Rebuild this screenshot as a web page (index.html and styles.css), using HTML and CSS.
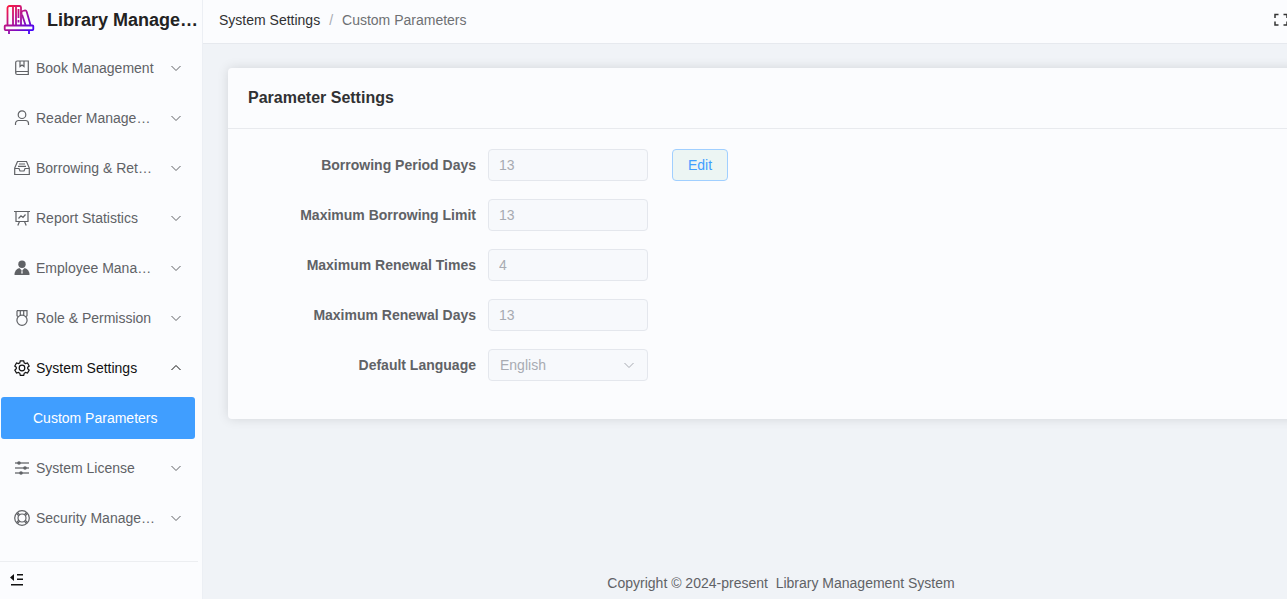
FILE: index.html
```html
<!DOCTYPE html>
<html lang="en">
<head>
<meta charset="utf-8">
<title>Library Management System</title>
<meta name="viewport" content="width=device-width, initial-scale=1">
<link rel="stylesheet" href="styles.css">
</head>
<body>
<svg class="defs" aria-hidden="true">
  <defs>
    <linearGradient id="brand" gradientUnits="userSpaceOnUse" x1="3" y1="3" x2="27" y2="31">
      <stop offset="0" stop-color="#ff1a3c"/>
      <stop offset="0.5" stop-color="#a8109a"/>
      <stop offset="1" stop-color="#3a00ff"/>
    </linearGradient>
    <symbol id="down" viewBox="0 0 12 12"><path d="M1.500 4 6 8.500 10.500 4"/></symbol>
    <symbol id="up" viewBox="0 0 12 12"><path d="M1.500 8 6 3.500 10.500 8"/></symbol>
  </defs>
</svg>
<div class="app">
  <aside class="sidebar">
    <div class="brand">
      <svg class="logo" viewBox="0 0 32 32" aria-hidden="true">
        <g fill="none" stroke="url(#brand)" stroke-width="1.800" stroke-linejoin="round">
          <path d="M4.500 22V5a2 2 0 0 1 2-2h10a1.500 1.500 0 0 1 1.500 1.500V22M10 3v19M13 3v19"/>
          <path d="M18.500 11V9.500q0-1.200 1.200-1.500l2-.5q1.500-.3 2 1.200L27.500 22M19 11.500l3.500 10.500"/>
          <path d="M2.500 22.500h27q.8 0 .8.800v3q0 .8-.8.800h-27q-.8 0-.8-.8v-3q0-.8.800-.8zM6 27v4M26 27v4"/>
          <path d="M15.500 6v9M15.500 17v2.500"/>
        </g>
      </svg>
      <h1 class="brand-name">Library Management System</h1>
    </div>
    <nav class="menu">
      <button class="item" type="button">
        <svg class="icon" viewBox="0 0 16 16"><path d="M3.500 1h10.800v13.500H3.200a1.500 1.500 0 0 1-1.500-1.500V2.500A1.500 1.500 0 0 1 3.200 1h.3M1.700 13q0-1.500 1.500-1.500h11M6 1v5.500l2-1.500 2 1.500V1"/></svg>
        <span class="text">Book Management</span><svg class="arrow"><use href="#down"/></svg>
      </button>
      <button class="item" type="button">
        <svg class="icon" viewBox="0 0 16 16"><circle cx="8" cy="4.700" r="3.800"/><path d="M1.500 15v-1.500a3 3 0 0 1 3-3h7a3 3 0 0 1 3 3V15"/></svg>
        <span class="text">Reader Management</span><svg class="arrow"><use href="#down"/></svg>
      </button>
      <button class="item" type="button">
        <svg class="icon" viewBox="0 0 16 16"><path d="M3.500 1.500h9L15.300 8v6.500H.7V8zM.7 8.500H5l1 2.500h4l1-2.500h4.300M5 4h6M4 6.300h8"/></svg>
        <span class="text">Borrowing &amp; Return</span><svg class="arrow"><use href="#down"/></svg>
      </button>
      <button class="item" type="button">
        <svg class="icon" viewBox="0 0 16 16"><path d="M0 1.500h16M2 1.500v10h12v-10M5.500 11.500l-1.700 4M10.500 11.500l1.700 4M4.500 8.500 7 5.800l2 1.700L11.500 4.500"/></svg>
        <span class="text">Report Statistics</span><svg class="arrow"><use href="#down"/></svg>
      </button>
      <button class="item" type="button">
        <svg class="icon solid" viewBox="0 0 16 16"><circle cx="8" cy="4.300" r="3.700"/><path d="M.5 15q0-5.500 4.800-7l2.300 2.200L7.300 13l.7 1 .7-1-.3-2.800L10.700 8q4.800 1.500 4.800 7z"/></svg>
        <span class="text">Employee Management</span><svg class="arrow"><use href="#down"/></svg>
      </button>
      <button class="item" type="button">
        <svg class="icon" viewBox="0 0 16 16"><circle cx="8" cy="10.300" r="5.100"/><path d="M3 .7h10v5l-1 1M3 .7v5l1 1M6.300.7v4.500M9.700.7v4.500"/></svg>
        <span class="text">Role &amp; Permission</span><svg class="arrow"><use href="#down"/></svg>
      </button>
      <button class="item open" type="button" aria-expanded="true">
        <svg class="icon" viewBox="0 0 16 16"><path d="M6.300.8h3.400l.5 2 1.300.8 2-.6 1.700 3-1.500 1.300v1.500l1.500 1.300-1.700 3-2-.6-1.300.8-.5 2H6.300l-.5-2-1.300-.8-2 .6-1.700-3 1.500-1.400V7.300L.8 6l1.700-3 2 .6 1.300-.8z"/><circle cx="8" cy="8" r="2.800"/></svg>
        <span class="text">System Settings</span><svg class="arrow"><use href="#up"/></svg>
      </button>
      <a class="subitem" href="#custom" aria-current="page">Custom Parameters</a>
      <button class="item" type="button">
        <svg class="icon" viewBox="0 0 16 16"><path class="rails" d="M1 3h14M1 8h14M1 13h14"/><g class="dots"><circle cx="5" cy="3" r="1.800"/><circle cx="11" cy="8" r="1.800"/><circle cx="7" cy="13" r="1.800"/></g></svg>
        <span class="text">System License</span><svg class="arrow"><use href="#down"/></svg>
      </button>
      <button class="item" type="button">
        <svg class="icon" viewBox="0 0 16 16"><circle cx="8" cy="8" r="7.300"/><circle cx="8" cy="8" r="4"/><path d="m2.500 3.500 2.300 2.300M3.500 2.500l2.300 2.300M12.500 2.500l-2.300 2.300M13.500 3.500l-2.300 2.300M2.500 12.500l2.300-2.300M3.500 13.500l2.300-2.300M13.500 12.500l-2.300-2.300M12.500 13.500l-2.300-2.300"/></svg>
        <span class="text">Security Management</span><svg class="arrow"><use href="#down"/></svg>
      </button>
    </nav>
    <div class="side-foot">
      <button class="plain" type="button" aria-label="Collapse menu">
        <svg class="fold" viewBox="0 0 14 14"><path d="M4 2v7L0 5.500zM7 2h6v1.500H7zM7 6.500h6V8H7zM1 12h12v1.500H1z"/></svg>
      </button>
    </div>
  </aside>
  <div class="page">
    <header class="topbar">
      <nav class="crumbs" aria-label="Breadcrumb">
        <a href="#settings">System Settings</a><span class="slash">/</span><span>Custom Parameters</span>
      </nav>
      <button class="plain full" type="button" aria-label="Full screen">
        <svg class="expand" viewBox="0 0 14 14"><path d="M1 5V1.500h3.500M9.500 1.500H13V5M13 8.500V12H9.500M4.500 12H1V8.500"/></svg>
      </button>
    </header>
    <main class="content">
      <section class="card">
        <h2 class="card-title">Parameter Settings</h2>
        <form class="form">
          <div class="row">
            <label for="period">Borrowing Period Days</label>
            <input class="field" id="period" value="13" disabled>
            <button class="edit" type="button">Edit</button>
          </div>
          <div class="row">
            <label for="limit">Maximum Borrowing Limit</label>
            <input class="field" id="limit" value="13" disabled>
          </div>
          <div class="row">
            <label for="times">Maximum Renewal Times</label>
            <input class="field" id="times" value="4" disabled>
          </div>
          <div class="row">
            <label for="days">Maximum Renewal Days</label>
            <input class="field" id="days" value="13" disabled>
          </div>
          <div class="row">
            <label for="language">Default Language</label>
            <div class="select">
              <select class="field" id="language" disabled><option>English</option></select>
              <svg class="arrow caret"><use href="#down"/></svg>
            </div>
          </div>
        </form>
      </section>
    </main>
    <footer class="copyright">Copyright © 2024-present&nbsp; Library Management System</footer>
  </div>
</div>
</body>
</html>
```
FILE: styles.css
```css
* {
  box-sizing: border-box;
}

body {
  margin: 0;
  font: 14px/20px "Liberation Sans", Arial, sans-serif;
  color: #606266;
  background: #f0f3f7;
}

button,
input,
select {
  font: inherit;
  color: inherit;
}

a {
  color: inherit;
  text-decoration: none;
}

.defs {
  position: absolute;
  width: 0;
  height: 0;
}

.app {
  display: flex;
  min-height: 100vh;
  overflow: hidden;
}

.sidebar {
  display: flex;
  flex-direction: column;
  flex: none;
  width: 203px;
  background: #fbfcfe;
  border-right: 1px solid #eceff4;
}

.brand {
  display: flex;
  align-items: center;
  gap: 12px;
  height: 43px;
  padding: 0 0 4px 3px;
}

.logo {
  flex: none;
  width: 32px;
  height: 32px;
  margin-bottom: 2px;
}

.brand-name {
  margin: 0;
  font-size: 18px;
  line-height: 24px;
  color: #222;
  white-space: nowrap;
  overflow: hidden;
  text-overflow: ellipsis;
}

.menu {
  flex: 1;
}

.item {
  display: flex;
  align-items: center;
  gap: 6px;
  width: 100%;
  height: 50px;
  padding: 0 20px 0 14px;
  border: 0;
  background: none;
  text-align: left;
}

.item.open {
  color: #111;
}

.icon,
.arrow {
  flex: none;
  fill: none;
  stroke: currentColor;
}

.icon {
  width: 16px;
  height: 16px;
  stroke-width: 1.2;
}

.icon.solid {
  fill: currentColor;
  stroke: none;
}

.rails {
  stroke: #999b9e;
  stroke-width: 2;
}

.dots {
  fill: currentColor;
  stroke: none;
}

.arrow {
  width: 12px;
  height: 12px;
}

.text {
  flex: 1;
  margin-right: 8px;
  white-space: nowrap;
  overflow: hidden;
  text-overflow: ellipsis;
}

.subitem {
  display: block;
  margin: 4px 7px 4px 1px;
  padding: 0 32px;
  line-height: 42px;
  border-radius: 3px;
  background: #409eff;
  color: #fff;
}

.side-foot {
  display: flex;
  align-items: center;
  height: 38px;
  margin-right: 4px;
  padding: 0 0 4px 10px;
  border-top: 1px solid #eceef1;
}

.plain {
  display: flex;
  padding: 0;
  border: 0;
  background: none;
}

.full {
  margin-right: -1px;
}

.fold {
  width: 14px;
  height: 14px;
  fill: #111;
}

.page {
  display: flex;
  flex-direction: column;
  flex: 1;
  min-width: 0;
}

.topbar {
  display: flex;
  align-items: center;
  justify-content: space-between;
  height: 44px;
  padding: 0 0 3px 16px;
  background: #fbfcfe;
  border-bottom: 1px solid #e6e9ee;
}

.crumbs {
  display: flex;
  gap: 9px;
  color: #6e7073;
}

.crumbs a {
  color: #303133;
}

.slash {
  color: #a8abb2;
}

.expand {
  width: 14px;
  height: 14px;
  fill: none;
  stroke: #333;
  stroke-width: 1.5;
}

.content {
  flex: 1;
  padding: 24px 0 24px 25px;
}

.card {
  margin-right: -20px;
  border-radius: 4px;
  background: #fbfcfe;
  box-shadow: 0 0 12px rgba(0, 0, 0, 0.12);
}

.card-title {
  margin: 0;
  padding: 18px 20px;
  font-size: 16px;
  line-height: 24px;
  color: #303133;
  border-bottom: 1px solid #e8eaee;
}

.form {
  display: flex;
  flex-direction: column;
  gap: 18px;
  padding: 20px 20px 38px;
}

.row {
  display: flex;
  align-items: center;
}

.row label {
  width: 240px;
  padding-right: 12px;
  text-align: right;
  font-weight: bold;
}

.field {
  width: 160px;
  height: 32px;
  padding: 0 11px;
  border: 1px solid #e4e7ed;
  border-radius: 4px;
  background: #f7f9fc;
  color: #a8abb2;
  opacity: 1;
  appearance: none;
}

input.field {
  padding: 0 10px;
}

.select {
  position: relative;
}

.caret {
  position: absolute;
  top: 10px;
  right: 13px;
  color: #a8abb2;
}

.edit {
  height: 32px;
  margin-left: 24px;
  padding: 0 15px;
  border: 1px solid #a0cfff;
  border-radius: 4px;
  background: #ecf5f3;
  color: #409eff;
}

.copyright {
  padding: 6px 0;
  text-align: center;
  margin-right: 128px;
  margin-left: 200px;
}
```
